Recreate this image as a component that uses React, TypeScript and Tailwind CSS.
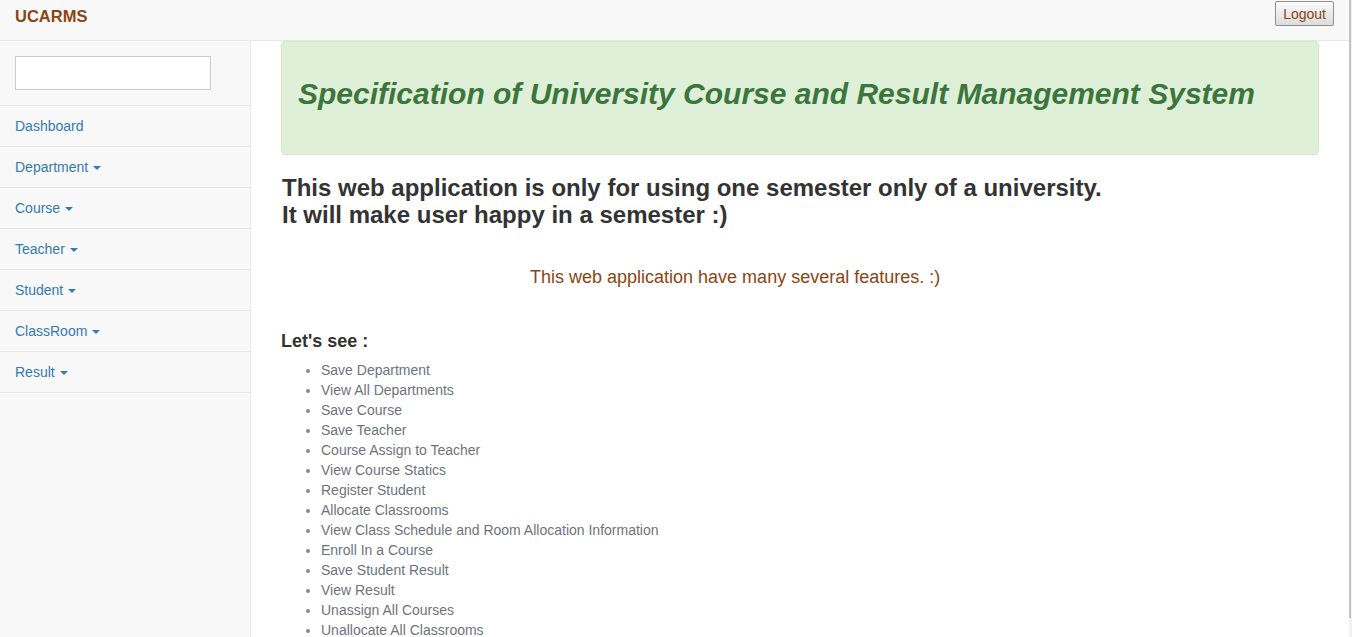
// UCARMS 首頁：頂欄 + 側欄選單 + 系統說明
const FONT = { fontFamily: '"Liberation Sans", Arial, Helvetica, sans-serif' };

const MENU: ReadonlyArray<{ label: string; dropdown: boolean }> = [
  { label: 'Dashboard', dropdown: false },
  { label: 'Department', dropdown: true },
  { label: 'Course', dropdown: true },
  { label: 'Teacher', dropdown: true },
  { label: 'Student', dropdown: true },
  { label: 'ClassRoom', dropdown: true },
  { label: 'Result', dropdown: true },
];

const FEATURES = [
  'Save Department',
  'View All Departments',
  'Save Course',
  'Save Teacher',
  'Course Assign to Teacher',
  'View Course Statics',
  'Register Student',
  'Allocate Classrooms',
  'View Class Schedule and Room Allocation Information',
  'Enroll In a Course',
  'Save Student Result',
  'View Result',
  'Unassign All Courses',
  'Unallocate All Classrooms',
];

function Caret() {
  return (
    <span className="ml-[5px] inline-block h-0 w-0 border-x-[4px] border-t-[4px] border-x-transparent border-t-[#337ab7] align-middle" />
  );
}

function Sidebar() {
  return (
    <aside className="w-[251px] shrink-0 border-r border-[#e7e7e7] bg-[#f8f8f8]">
      <ul>
        <li className="border-b border-[#e7e7e7] p-[15px]">
          <input
            type="text"
            className="block h-[34px] w-[196px] border border-[#ccc] bg-white px-3 text-sm outline-none"
          />
        </li>
        {MENU.map((m) => (
          <li key={m.label} className="border-b border-[#e7e7e7]">
            <a className="block px-[15px] py-[10px] text-[14px] leading-[20px] text-[#337ab7]">
              {m.label}
              {m.dropdown && <Caret />}
            </a>
          </li>
        ))}
      </ul>
    </aside>
  );
}

export default function App() {
  return (
    <div className="flex h-[637px] w-[1352px] overflow-hidden bg-white text-[#333]" style={FONT}>
      <div className="flex w-[1349px] shrink-0 flex-col">
        {/* 頂欄 */}
        <header className="flex h-[41px] shrink-0 items-start justify-between border-b border-[#e7e7e7] bg-[#f8f8f8]">
          <span className="pl-[15px] pt-[6px] text-[16.5px] font-bold leading-[20px] text-[#8b4513]">UCARMS</span>
          <button className="mr-[15px] mt-px h-[25px] rounded-[2px] border border-[#8f8f8f] bg-gradient-to-b from-[#fbfbfb] to-[#dcdcdc] px-[7px] text-[14px] leading-[20px] text-[#8b4513]">
            Logout
          </button>
        </header>

        <div className="flex min-h-0 flex-1">
          <Sidebar />

          {/* 主內容 */}
          <main className="flex-1 px-[30px]">
            <div className="rounded-[4px] border border-[#d6e9c6] bg-[#dff0d8] px-[16px] pb-[44px] pt-[35px]">
              <h2 className="text-[30px] font-bold italic leading-[33px] text-[#3c763d]">
                Specification of University Course and Result Management System
              </h2>
            </div>

            <h3 className="ml-px mt-[20px] text-[24px] font-bold leading-[26.5px] text-[#333]">
              This web application is only for using one semester only of a university.
              <br />
              It will make user happy in a semester :)
            </h3>

            <div className="ml-[249px] mt-[38px] whitespace-nowrap">
              <span className="text-[18px] leading-[22px] text-[#8b4513]">
                This web application have many several features. :)
              </span>
            </div>

            <h4 className="mt-[41px] text-[18px] font-bold leading-[20px] text-[#333]">Let's see :</h4>

            <ul className="mt-[9px] list-disc pl-[40px] text-[14px] leading-[20px] text-[#6f737b] marker:text-[#8a8a8a]">
              {FEATURES.map((f) => (
                <li key={f}>{f}</li>
              ))}
            </ul>
          </main>
        </div>
      </div>

      {/* 捲軸 */}
      <div className="w-[3px] shrink-0 bg-[#f1f1f1]">
        <div className="h-[618px] w-[2px] bg-[#c1c1c1]" />
      </div>
    </div>
  );
}
